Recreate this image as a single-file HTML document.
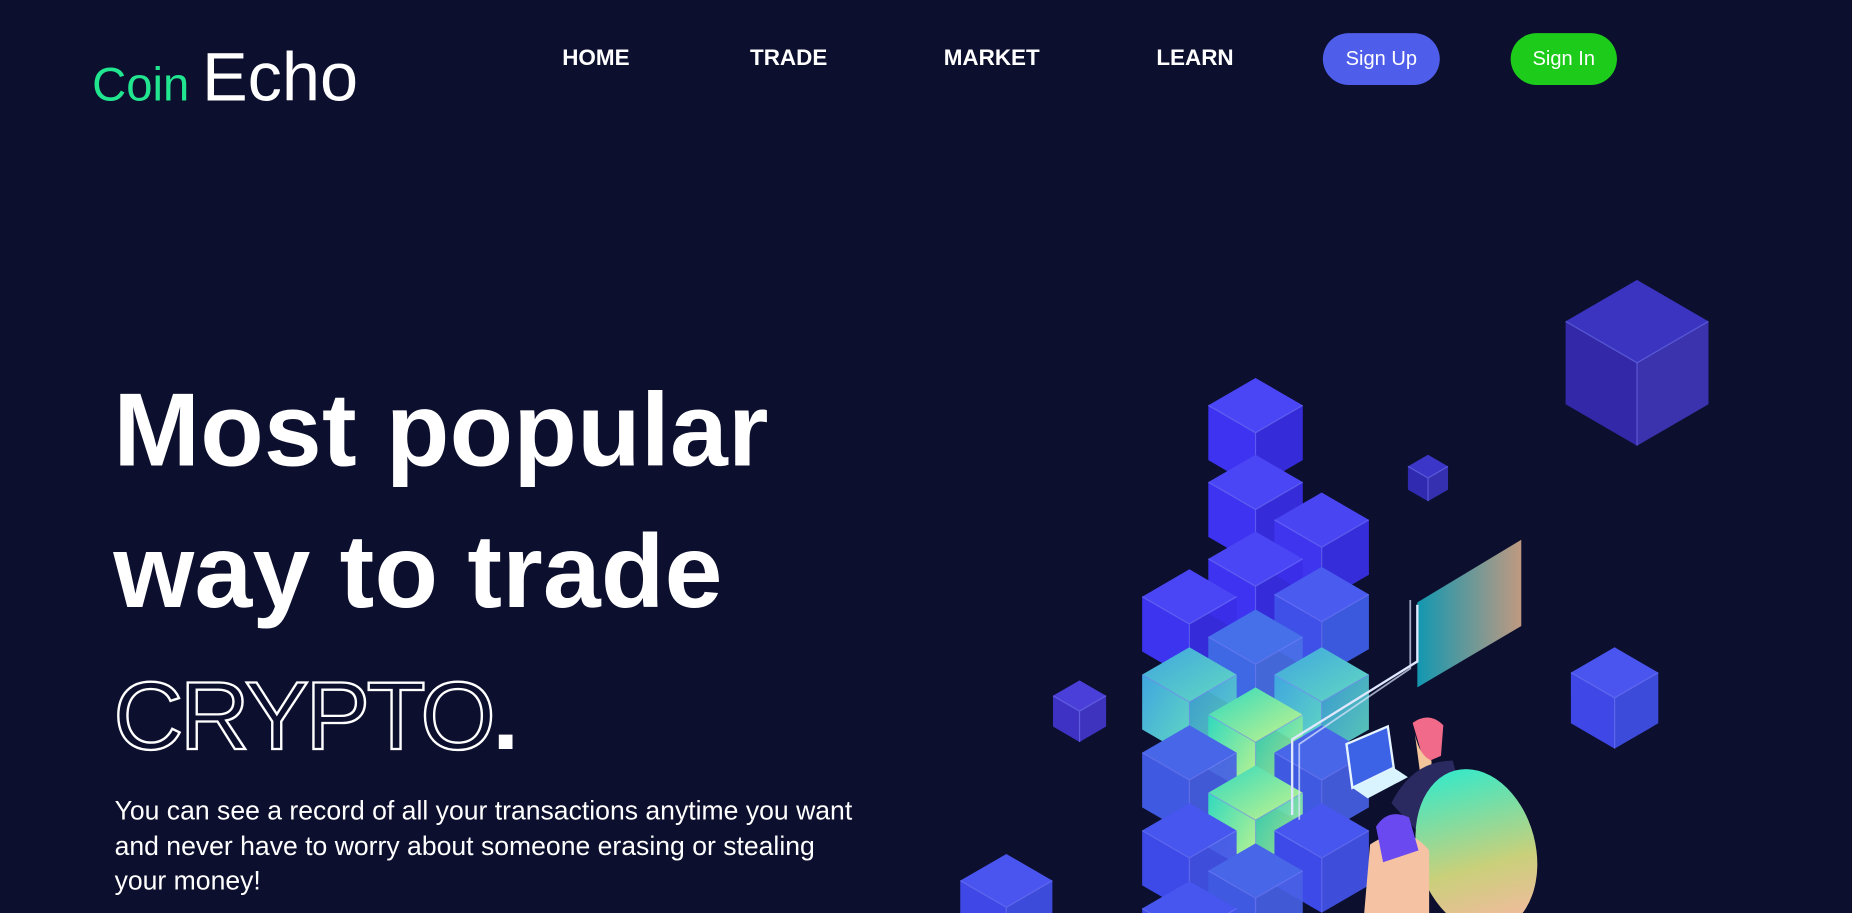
<!DOCTYPE html>
<html><head><meta charset="utf-8">
<style>
html,body{margin:0;padding:0;background:#0c0f2d;overflow:hidden;width:1852px;height:913px}
#w{position:absolute;left:0;top:0;width:1568px;height:773px;overflow:hidden;transform:scale(1.18112,1.18111);transform-origin:0 0;font-family:"Liberation Sans",sans-serif;color:#fff}
.a{position:absolute;white-space:nowrap}
.nav{font-size:19px;font-weight:700;top:39px}
.btn{position:absolute;top:28px;height:44px;border-radius:22px;font-size:17px;line-height:44px;text-align:center}
h1{margin:0;position:absolute;left:96px;font-size:88px;font-weight:700;letter-spacing:0.2px;line-height:1}
p{margin:0;position:absolute;left:97px;top:672px;font-size:22.5px;line-height:29.5px;width:760px;white-space:nowrap}
</style></head><body><div id="w">
<div class="a" style="left:78px;top:50px;font-size:40px;color:#21e58f">Coin</div>
<div class="a" style="left:171px;top:32px;font-size:58px;color:#fff">Echo</div>
<div class="a nav" style="left:476px">HOME</div>
<div class="a nav" style="left:635px">TRADE</div>
<div class="a nav" style="left:799px">MARKET</div>
<div class="a nav" style="left:979px">LEARN</div>
<div class="btn" style="left:1120px;width:99px;background:#4f5eea">Sign Up</div>
<div class="btn" style="left:1279px;width:90px;background:#1dcb1a">Sign In</div>
<h1 style="top:320px">Most popular</h1>
<h1 style="top:440px">way to trade</h1>
<h1 style="top:566px;font-size:82px;color:transparent;-webkit-text-stroke:2px #fff;font-weight:400;letter-spacing:-3px">CRYPTO<span style="color:#fff;-webkit-text-stroke:0;font-weight:700">.</span></h1>
<p>You can see a record of all your transactions anytime you want<br>and never have to worry about someone erasing or stealing<br>your money!</p>
<svg id="s" class="a" style="left:0;top:0" width="1568" height="773" viewBox="0 0 1568 773">
<defs>
<linearGradient id="tl" x1="0" y1="0" x2="1" y2="1"><stop offset="0" stop-color="#3fa6e0"/><stop offset="1" stop-color="#63d9c0"/></linearGradient>
<linearGradient id="gr" x1="0" y1="0" x2="1" y2="1"><stop offset="0" stop-color="#2fd9c0"/><stop offset="1" stop-color="#c9f58a"/></linearGradient>
<linearGradient id="pn" x1="0" y1="0" x2="1" y2="0"><stop offset="0" stop-color="#13a7c0"/><stop offset="1" stop-color="#d4a98a"/></linearGradient>
<linearGradient id="eg" x1="0" y1="0" x2="0" y2="1"><stop offset="0" stop-color="#3be8c6"/><stop offset="0.6" stop-color="#c9d07a"/><stop offset="1" stop-color="#f4b9a0"/></linearGradient>
</defs>
<g id="c"></g>
<polygon points="1200,510 1288,457 1288,530 1200,582" fill="url(#pn)" opacity="0.9"/>
<path d="M1200,512 L1200,560 L1094,626 L1094,690" stroke="#dfe8ff" stroke-width="2" fill="none"/>
<path d="M1194,508 L1194,566 L1100,630 L1100,694" stroke="#dfe8ff" stroke-width="1.5" fill="none" opacity=".7"/>
<polygon points="1140,630 1175,615 1180,650 1145,667" fill="#3c62e6" stroke="#e6f4ff" stroke-width="2"/>
<polygon points="1145,667 1180,650 1192,658 1158,676" fill="#d9f4ff"/>
<path d="M1196,612 q14,-10 26,2 l-2,26 -14,6z" fill="#f26a8a"/>
<path d="M1198,622 q4,18 14,22 l0,8 -10,0z" fill="#f4c49a"/>
<path d="M1178,680 q18,-36 52,-36 l10,40 -40,20z" fill="#2a2a60"/>
<ellipse cx="1250" cy="720" rx="50" ry="70" fill="url(#eg)" transform="rotate(-15 1250 720)"/>
<path d="M1160,715 q30,-20 50,5 l0,53 -55,0z" fill="#f5c2a4"/>
<path d="M1165,700 q10,-16 28,-8 l8,28 -30,10z" fill="#6a4af0"/>
</svg>
<script>
var cubes=[
[1386,237,121,'#3a34c0','#3329a8','#3f36b8'],
[1209,385,34,'#3c36c8','#2f2ab0','#3a33bb'],
[1063,320,80,'#4b46f5','#3d33f0','#3a2ee8'],
[1063,385,80,'#4b46f5','#3d33f0','#3a2ee8'],
[1119,417,80,'#4a45f2','#3f35ee','#3a2fe9'],
[1063,450,80,'#4b46f5','#3d33f0','#3a2ee8'],
[1119,480,80,'#4a5cf0','#3f50e8','#4060ec'],
[1007,482,80,'#4a46f5','#3d34f0','#3a2ee8'],
[1063,516,80,'#4570ea','#3e68e4','#4a6fe6'],
[1367,548,74,'#4a55f0','#3f48e6','#4250ea'],
[1007,548,80,'url(#tl)','url(#tl)','url(#tl)'],
[1119,548,80,'url(#tl)','url(#tl)','url(#tl)'],
[914,576,45,'#4a3fd8','#3e32c4','#4336cc'],
[1063,582,80,'url(#gr)','url(#gr)','url(#gr)'],
[1007,614,80,'#4866e8','#3f5ae0','#4860e4'],
[1119,614,80,'#4866e8','#3f5ae0','#4860e4'],
[1063,648,80,'url(#gr)','url(#gr)','url(#gr)'],
[1007,680,80,'#4656ee','#3d4ae8','#4452ea'],
[1119,680,80,'#4656ee','#3d4ae8','#4452ea'],
[852,723,78,'#4a55f0','#3f48e6','#4250ea'],
[1063,714,80,'#4866e8','#3f5ae0','#4860e4'],
[1007,746,80,'#4656ee','#3d4ae8','#4452ea']
];
var h='';
cubes.forEach(function(c){var x=c[0],t=c[1],w=c[2],d=w*0.29,s=w*0.58,r=w/2;
h+='<polygon points="'+x+','+t+' '+(x+r)+','+(t+d)+' '+x+','+(t+2*d)+' '+(x-r)+','+(t+d)+'" fill="'+c[3]+'"/>';
h+='<polygon points="'+(x-r)+','+(t+d)+' '+x+','+(t+2*d)+' '+x+','+(t+2*d+s)+' '+(x-r)+','+(t+d+s)+'" fill="'+c[4]+'"/>';
h+='<polygon points="'+(x+r)+','+(t+d)+' '+x+','+(t+2*d)+' '+x+','+(t+2*d+s)+' '+(x+r)+','+(t+d+s)+'" fill="'+c[5]+'" opacity="0.92"/>';
h+='<path d="M'+(x-r)+','+(t+d)+' L'+x+','+(t+2*d)+' L'+(x+r)+','+(t+d)+' M'+x+','+(t+2*d)+' L'+x+','+(t+2*d+s)+'" stroke="#7f86ff" stroke-width="1" fill="none" opacity=".5"/>';});
document.getElementById('c').innerHTML=h;
</script>
</div></body></html>
